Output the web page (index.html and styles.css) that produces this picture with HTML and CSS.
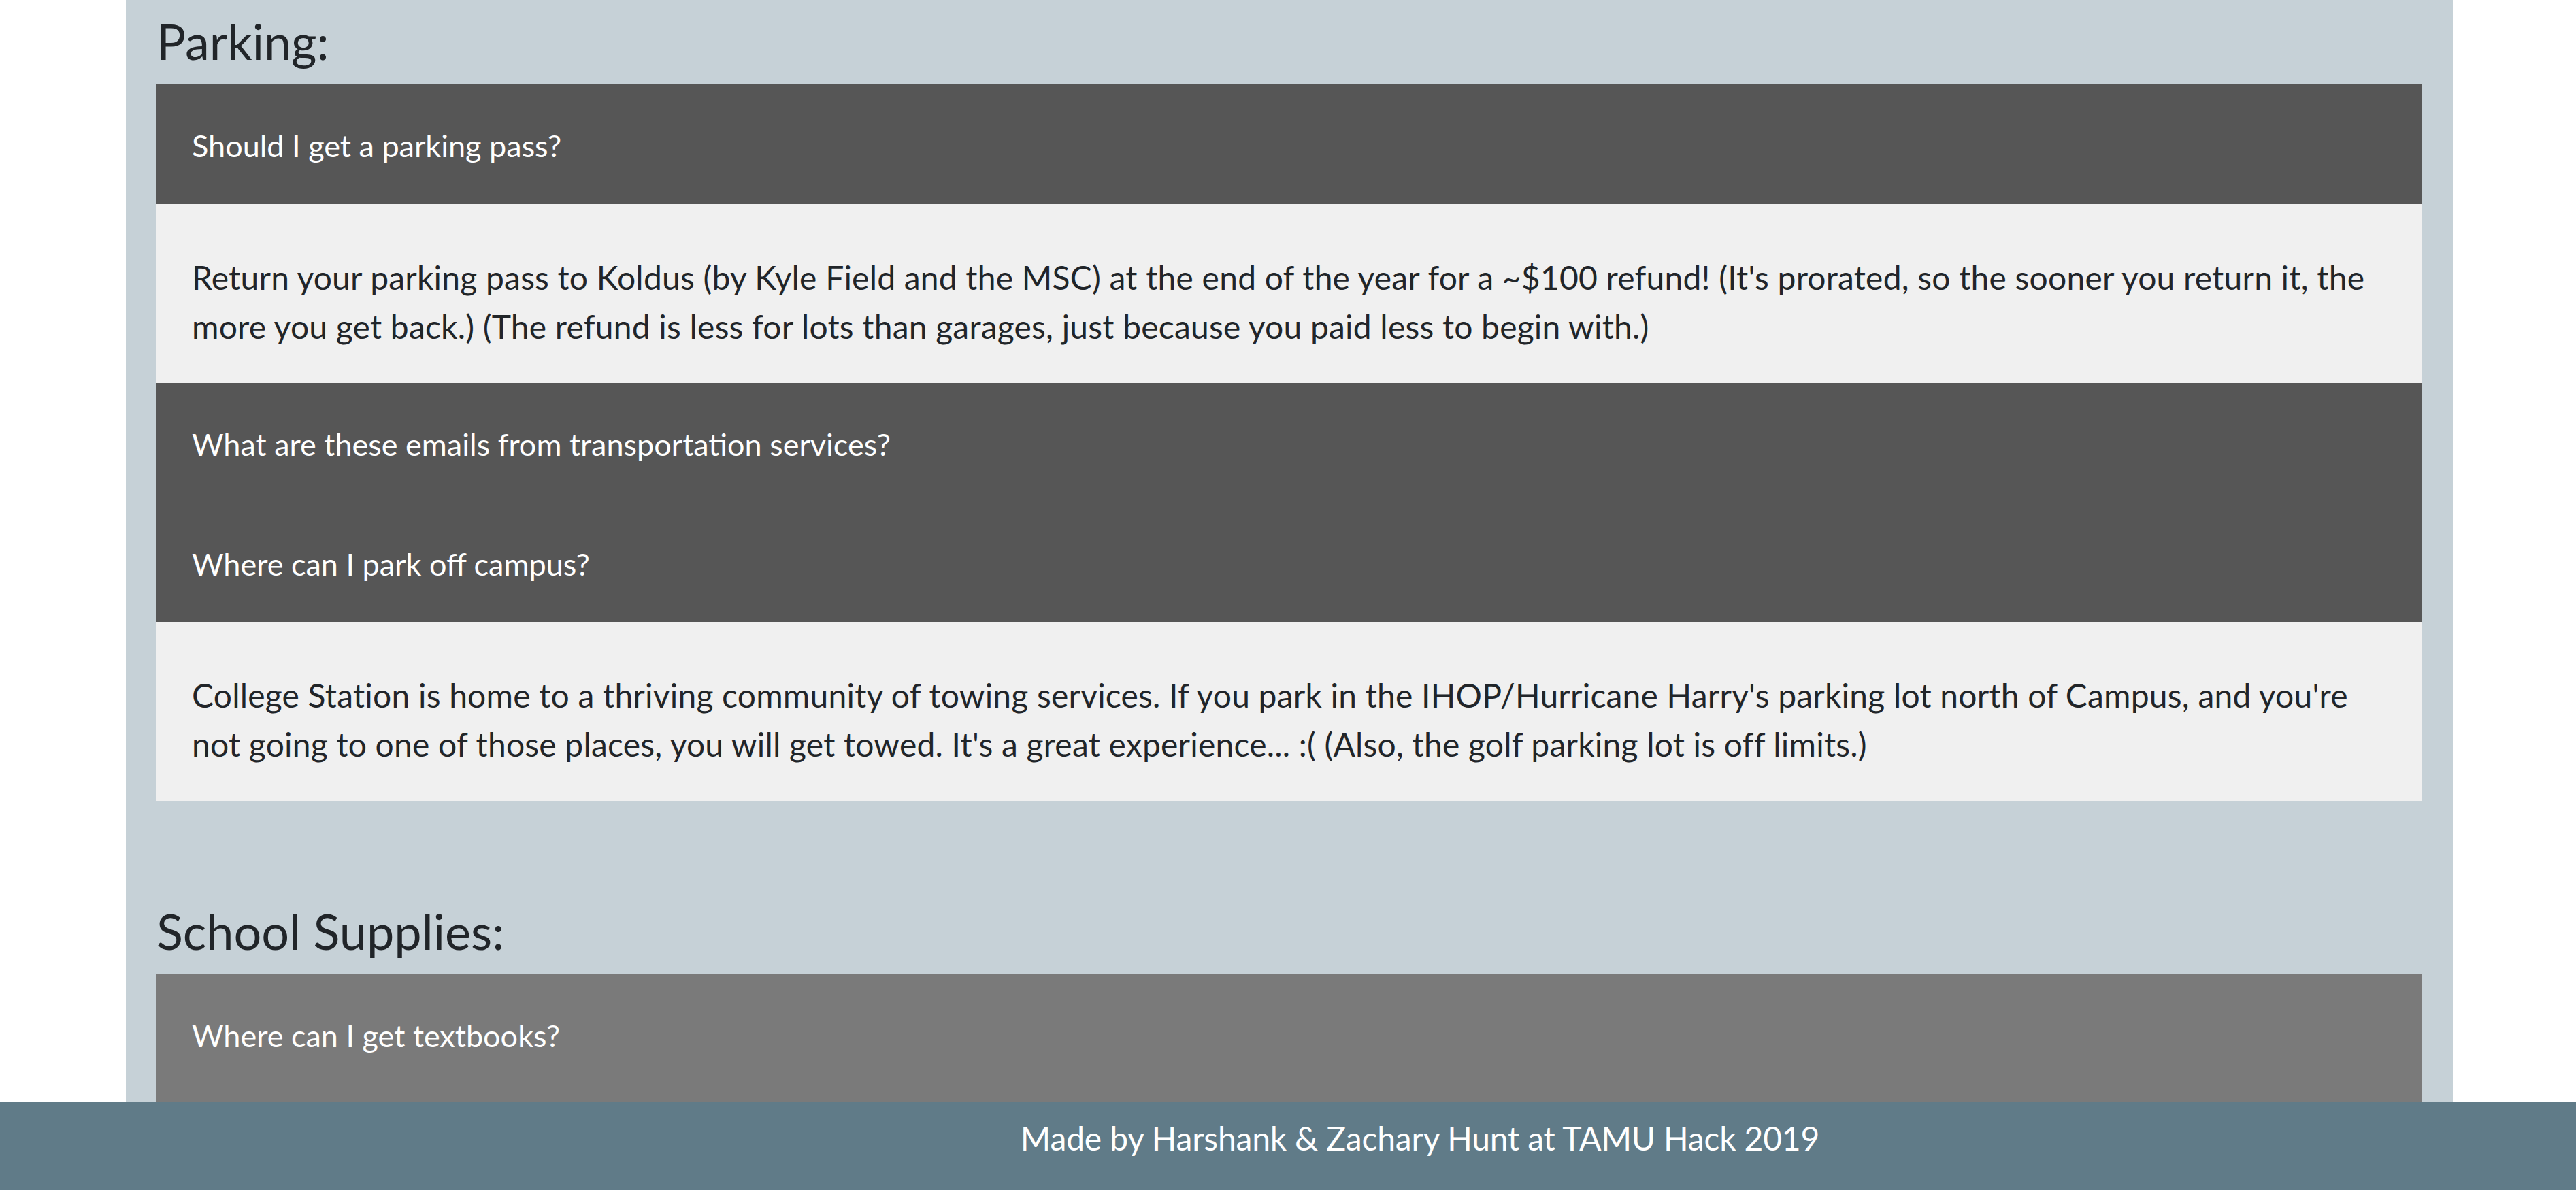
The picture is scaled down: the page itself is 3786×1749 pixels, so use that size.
FILE: index.html
```html
<!DOCTYPE html>
<html lang="en">
<head>
<meta charset="utf-8">
<title>FAQ</title>
<link rel="stylesheet" href="styles.css">
</head>
<body>
<main class="container">
  <section class="faq-section">
    <h4 class="section-title">Parking:</h4>
    <div class="faq-list">
      <div class="faq-item">
        <div class="faq-question">Should I get a parking pass?</div>
        <div class="faq-answer">Return your parking pass to Koldus (by Kyle Field and the MSC) at the end of the year for a ~$100 refund! (It's prorated, so the sooner you return it, the more you get back.) (The refund is less for lots than garages, just because you paid less to begin with.)</div>
      </div>
      <div class="faq-item">
        <div class="faq-question">What are these emails from transportation services?</div>
      </div>
      <div class="faq-item">
        <div class="faq-question">Where can I park off campus?</div>
        <div class="faq-answer">College Station is home to a thriving community of towing services. If you park in the IHOP/Hurricane Harry's parking lot north of Campus, and you're not going to one of those places, you will get towed. It's a great experience... :( (Also, the golf parking lot is off limits.)</div>
      </div>
    </div>
  </section>
  <section class="faq-section">
    <h4 class="section-title">School Supplies:</h4>
    <div class="faq-list">
      <div class="faq-item">
        <div class="faq-question faq-question--hover">Where can I get textbooks?</div>
      </div>
    </div>
  </section>
</main>
<footer class="site-footer">
  <p class="footer-text">Made by Harshank &amp; Zachary Hunt at TAMU Hack 2019</p>
</footer>
</body>
</html>
```
FILE: styles.css
```css
html, body {
  margin: 0;
  padding: 0;
}
body {
  background: #ffffff;
  font-family: "Lato", "Open Sans", sans-serif;
  color: #212529;
}
.container {
  width: 3420px;
  box-sizing: border-box;
  margin: 0 0 0 calc((100% - 3420px) / 2 + 2px);
  padding: 17px 45px 0 45px;
  background: #c6d1d7;
}
.faq-section + .faq-section {
  margin-top: 147px;
}
.section-title {
  margin: 0 0 21px 0;
  font-size: 72px;
  font-weight: 400;
  line-height: 86px;
  color: #212529;
}
.faq-list {
  display: flex;
  flex-direction: column;
}
.faq-question {
  background: #565656;
  color: #ffffff;
  font-size: 45px;
  line-height: 72px;
  padding: 54px 52px 49.5px 52px;
}
.faq-question--hover {
  background: #7a7a7a;
  padding-bottom: 61px;
}
.faq-answer {
  background: #f0f0f0;
  color: #212529;
  font-size: 48px;
  line-height: 72px;
  letter-spacing: 0.2px;
  padding: 72px 52px 47.75px 52px;
}
.site-footer {
  height: 130px;
  box-sizing: border-box;
  background: #607b88;
  color: #ffffff;
  padding: 18px 0 0 388px;
  text-align: center;
}
.footer-text {
  margin: 0;
  font-size: 48px;
  line-height: 72px;
  letter-spacing: -0.18px;
}
```
